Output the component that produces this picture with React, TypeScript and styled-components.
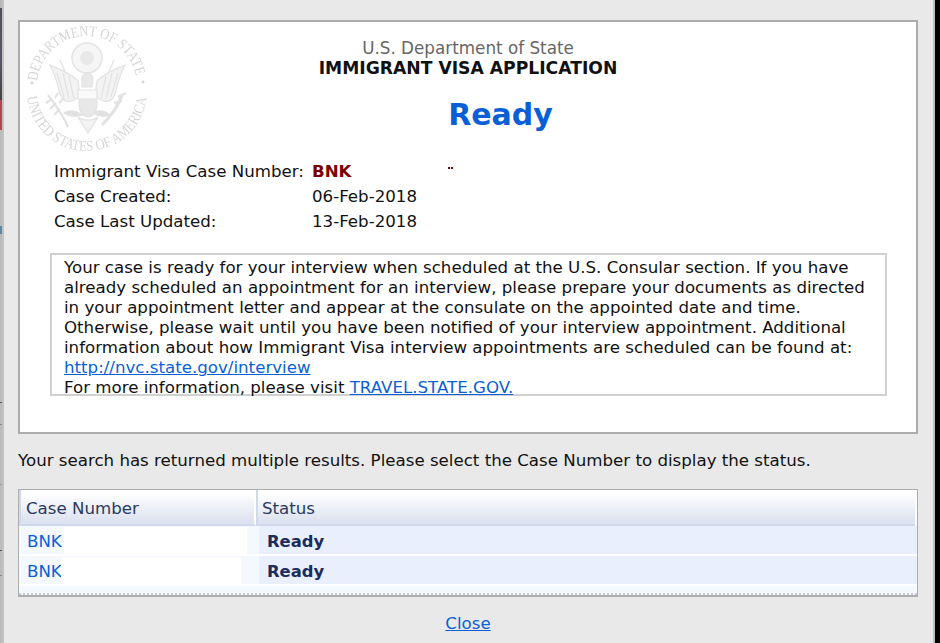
import React from "react";
import styled, {createGlobalStyle} from "styled-components";

const GlobalStyle = createGlobalStyle`
    html, body {
        margin: 0;
        padding: 0;
        background: #e9e9e9;
    }
    a {
        color: #0a5fd8;
    }
`;

const Page = styled.div`
    width: 940px;
    height: 643px;
    overflow: hidden;
    display: flex;
    font-family: "DejaVu Sans", Verdana, sans-serif;
    font-size: 16.65px;
    color: #111;
`;

const BehindLeft = styled.div`
    width: 4px;
    flex: none;
    background:
        linear-gradient(to right, transparent 2px, #c2c2c2 2px),
        linear-gradient(to bottom,
            #b8b8b8 0, #b8b8b8 8px, #50505c 8px, #55586a 60px, #444 100px,
            #b04a4a 100px, #b04a4a 130px, #bbb 130px,
            #bbb 226px, #5a8aa8 226px, #5a8aa8 234px, #bbb 234px,
            #bbb 402px, #555 402px, #555 403px, #bbb 403px,
            #bbb 424px, #888 424px, #888 425px, #bbb 425px,
            #bbb 484px, #999 484px, #999 485px, #bbb 485px,
            #bbb 550px, #555 550px, #555 551px, #bbb 551px,
            #bbb 575px, #888 575px, #888 576px, #bbb 576px);
`;

const Modal = styled.div`
    width: 929px;
    flex: none;
    box-sizing: border-box;
    background: #e9e9e9;
    padding: 20px 15px 0 14px;
`;

const BehindRight = styled.div`
    flex: 1;
    background: #000;
    border-left: 2px solid #bdbdbd;
`;

const Card = styled.div`
    position: relative;
    box-sizing: border-box;
    width: 900px;
    height: 414px;
    background: #fff;
    border: 2px solid #adadad;
    padding: 16px 30px 0 34px;
`;

const Seal = styled.svg`
    position: absolute;
    left: 2px;
    top: 3px;
    width: 130px;
    height: 130px;
    overflow: visible;
    filter: blur(0.4px);
`;

const SealText = styled.text`
    font-family: "Liberation Serif", serif;
    font-size: 15px;
    fill: #d6d6d6;
`;

const Heading = styled.div`
    position: relative;
    text-align: center;
    line-height: 20px;
    margin-left: -4px;
`;

const Agency = styled.div`
    color: #666;
    font-size: 16.8px;
`;

const FormName = styled.div`
    font-weight: bold;
    font-size: 17.2px;
`;

const Result = styled.div`
    position: relative;
    text-align: center;
    color: #0a5fd8;
    font-weight: bold;
    font-size: 30px;
    line-height: 40px;
    margin: 17px 0 24px 61px;
`;

const Details = styled.div`
    position: relative;
    margin-bottom: 19px;
`;

const DetailRow = styled.div`
    display: grid;
    grid-template-columns: 258px 1fr;
    line-height: 25px;
`;

const CaseRef = styled.span`
    color: #7b0000;
    font-weight: bold;
`;

const Specks = styled.span`
    display: inline-block;
    width: 5px;
    height: 2px;
    margin: 0 0 8px 96px;
    background: linear-gradient(to right, #7b0000 2px, transparent 2px, transparent 3px, #7b0000 3px);
`;

const Notice = styled.div`
    box-sizing: border-box;
    width: 837px;
    height: 143px;
    margin-left: -4px;
    border: 2px solid #d0d0d0;
    padding: 3px 0 0 12px;
    line-height: 20px;
    white-space: nowrap;
`;

const Intro = styled.div`
    line-height: 20px;
    margin: 17px 0 18px;
    white-space: nowrap;
`;

const ResultsTable = styled.div`
    position: relative;
    box-sizing: border-box;
    width: 900px;
    height: 108px;
    border: 1px solid #adadad;
    border-bottom-width: 2px;
    background: #fff;
`;

const TableRow = styled.div`
    display: grid;
    grid-template-columns: 240px 1fr;
    height: 28px;
    margin-bottom: 2px;
`;

const HeadRow = styled.div`
    display: grid;
    grid-template-columns: 237px 1fr;
    height: 36px;
`;

const HeadCell = styled.div<{$first?: boolean}>`
    box-sizing: border-box;
    padding: 9px 0 0 ${p => (p.$first ? "5px" : "4px")};
    line-height: 20px;
    color: #2a3a60;
    background: linear-gradient(to bottom, #fff 10%, #dde3f0 90%);
    border-bottom: 2px solid #d0d9e9;
    border-left: 2px solid #d0d9e9;
    ${p => (p.$first ? "border-right: 2px solid #fff;" : "margin-right: 2px;")}
`;

const CaseCell = styled.div`
    position: relative;
    box-sizing: border-box;
    background: #f4f8ff;
    padding: 3px 0 0 8px;
    line-height: 25px;
`;

const StatusCell = styled.div`
    box-sizing: border-box;
    background: #e9effd;
    padding: 3px 0 0 8px;
    line-height: 25px;
    font-weight: bold;
    color: #1c2c5c;
    font-size: 16.4px;
`;

const CaseLink = styled.a`
    color: #0a5fd8;
    text-decoration: none;
`;

const Redaction = styled.div<{$left: number; $width: number}>`
    position: absolute;
    top: 1px;
    bottom: 0;
    left: ${p => p.$left}px;
    width: ${p => p.$width}px;
    background: #fff;
`;

const TableFoot = styled.div`
    position: absolute;
    left: 0;
    right: 0;
    bottom: 0;
    height: 9px;
    background: #f4f8ff;
    border-bottom: 2px dotted #c8c8d0;
    box-sizing: border-box;
`;

const CloseBar = styled.div`
    text-align: center;
    line-height: 20px;
    padding-top: 17px;
`;

const rows = [
    {redactLeft: 45, redactWidth: 183},
    {redactLeft: 42, redactWidth: 180},
];

// watermark behind the heading
const DepartmentSeal = () => (
    <Seal viewBox="0 0 130 130" aria-hidden="true">
        <defs>
            <path id="sealTop" d="M 15 61 A 50 50 0 1 1 115 61" />
            <path id="sealBottom" d="M 5 66 A 60 60 0 0 0 125 66" />
        </defs>
        <SealText>
            <textPath href="#sealTop" startOffset="3%" textLength="142" lengthAdjust="spacingAndGlyphs">DEPARTMENT OF STATE</textPath>
        </SealText>
        <SealText>
            <textPath href="#sealBottom" startOffset="3%" textLength="176" lengthAdjust="spacingAndGlyphs">UNITED STATES OF AMERICA</textPath>
        </SealText>
        <circle cx="10" cy="58" r="1.5" fill="#d6d6d6" />
        <circle cx="121" cy="57" r="1.5" fill="#d6d6d6" />
        <circle cx="65" cy="33" r="15" fill="#f6f6f6" stroke="#e4e4e4" strokeWidth="1.5" />
        <circle cx="65" cy="33" r="7" fill="#e8e8e8" />
        <g fill="#f3f3f3" stroke="#e2e2e2" strokeWidth="1.2">
            <path d="M 28 40 C 36 44 46 46 56 56 L 58 70 C 50 80 40 78 37 66 C 35 56 32 48 28 40 Z" />
            <path d="M 103 40 C 95 44 85 46 75 56 L 73 70 C 81 80 91 78 94 66 C 96 56 99 48 103 40 Z" />
            <path d="M 35 48 L 42 72 M 41 48 L 47 74 M 47 51 L 52 74 M 96 48 L 89 72 M 90 48 L 84 74 M 84 51 L 79 74" fill="none" />
            <path d="M 38 35 L 44 49 M 92 35 L 86 49" fill="none" />
            <path d="M 58 70 L 74 70 C 76 80 75 90 66 92 C 57 90 56 80 58 70 Z" fill="#e8e8e8" />
            <path d="M 56 65 L 75 65 L 75 74 L 56 74 Z" fill="#fafafa" />
            <path d="M 60 52 C 64 46 69 47 71 53 L 70 62 L 60 62 Z" fill="#e8e8e8" />
            <path d="M 56 92 L 66 108 L 76 92 C 72 96 60 96 56 92 Z" />
            <path d="M 42 88 C 48 84 54 86 60 90 C 54 92 48 92 42 88 Z" fill="#e2e2e2" />
            <path d="M 72 88 C 78 84 84 86 88 90 C 84 92 76 92 72 88 Z" fill="#e2e2e2" />
        </g>
        <g fill="none" stroke="#e2e2e2" strokeWidth="2.2">
            <path d="M 26 70 C 32 78 40 88 46 102" />
            <path d="M 30 74 L 24 78 M 34 78 L 28 84 M 38 84 L 32 90 M 33 73 L 36 68 M 37 78 L 42 73" />
            <path d="M 100 70 C 96 82 88 92 80 100" strokeWidth="3.2" />
            <path d="M 96 72 L 104 68 M 92 78 L 100 76" />
        </g>
    </Seal>
);

const App = () => (
    <>
        <GlobalStyle />
        <Page>
            <BehindLeft />
            <Modal>
                <Card>
                    <DepartmentSeal />
                    <Heading>
                        <Agency>U.S. Department of State</Agency>
                        <FormName>IMMIGRANT VISA APPLICATION</FormName>
                    </Heading>
                    <Result>Ready</Result>
                    <Details>
                        <DetailRow>
                            <span>Immigrant Visa Case Number:</span>
                            <span><CaseRef>BNK</CaseRef><Specks /></span>
                        </DetailRow>
                        <DetailRow>
                            <span>Case Created:</span>
                            <span>06-Feb-2018</span>
                        </DetailRow>
                        <DetailRow>
                            <span>Case Last Updated:</span>
                            <span>13-Feb-2018</span>
                        </DetailRow>
                    </Details>
                    <Notice>
                        Your case is ready for your interview when scheduled at the U.S. Consular section. If you have<br />
                        already scheduled an appointment for an interview, please prepare your documents as directed<br />
                        in your appointment letter and appear at the consulate on the appointed date and time.<br />
                        Otherwise, please wait until you have been notified of your interview appointment. Additional<br />
                        information about how Immigrant Visa interview appointments are scheduled can be found at:<br />
                        <a href="#">http://nvc.state.gov/interview</a><br />
                        For more information, please visit <a href="#">TRAVEL.STATE.GOV.</a>
                    </Notice>
                </Card>
                <Intro>Your search has returned multiple results. Please select the Case Number to display the status.</Intro>
                <ResultsTable>
                    <HeadRow>
                        <HeadCell $first>Case Number</HeadCell>
                        <HeadCell>Status</HeadCell>
                    </HeadRow>
                    {rows.map((row, i) => (
                        <TableRow key={i}>
                            <CaseCell>
                                <CaseLink href="#">BNK</CaseLink>
                                <Redaction $left={row.redactLeft} $width={row.redactWidth} />
                            </CaseCell>
                            <StatusCell>Ready</StatusCell>
                        </TableRow>
                    ))}
                    <TableFoot />
                </ResultsTable>
                <CloseBar><a href="#">Close</a></CloseBar>
            </Modal>
            <BehindRight />
        </Page>
    </>
);

export default App;
